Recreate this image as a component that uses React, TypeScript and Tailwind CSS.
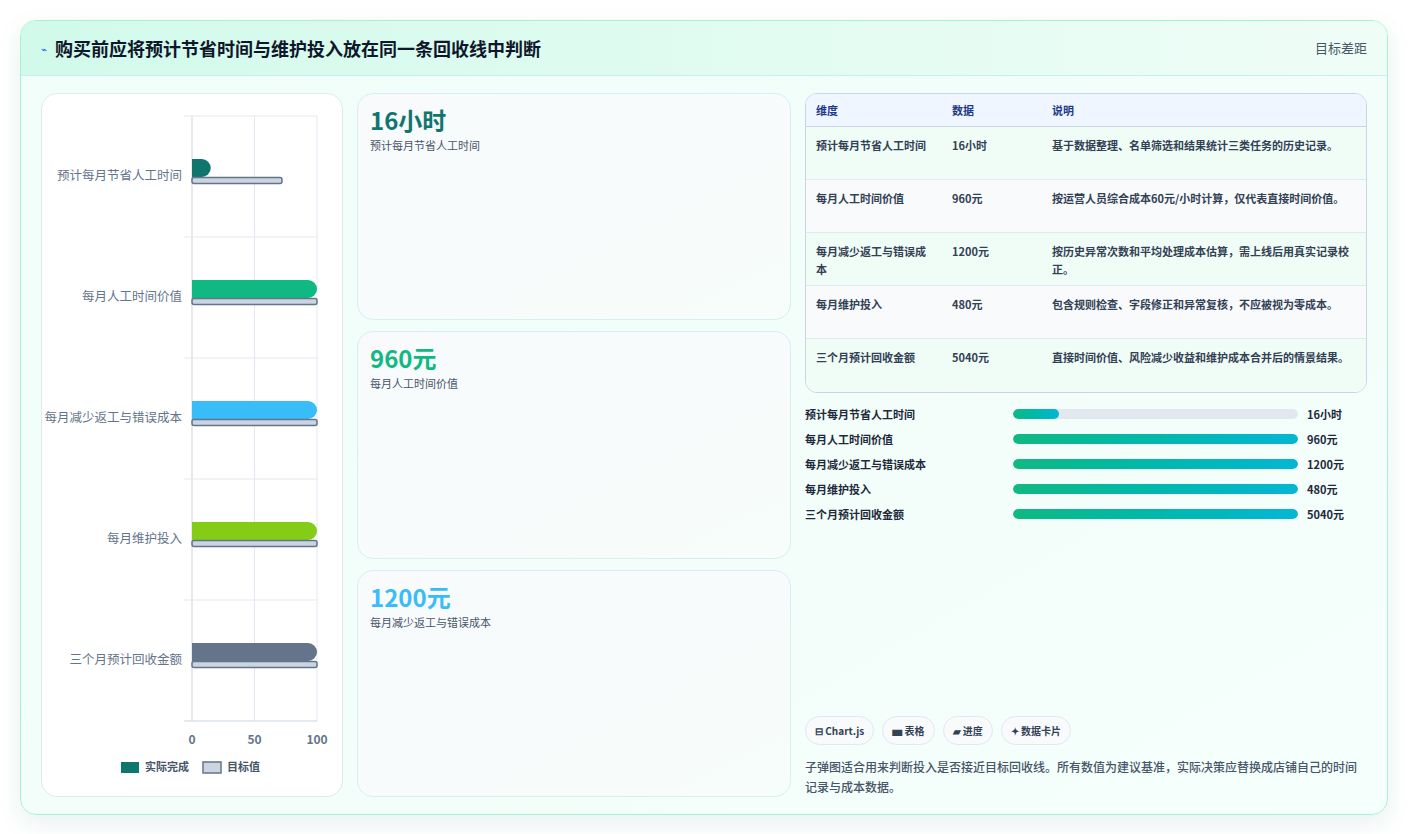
import React from "react";

const F = { fontFamily: '"Noto Sans CJK SC", "Noto Sans", sans-serif' };

const rows = [
  { l: "预计每月节省人工时间", a: 15, c: "#0f766e" },
  { l: "每月人工时间价值", a: 100, c: "#10b981" },
  { l: "每月减少返工与错误成本", a: 100, c: "#38bdf8" },
  { l: "每月维护投入", a: 100, c: "#84cc16" },
  { l: "三个月预计回收金额", a: 100, c: "#64748b" },
];
const targets = [72, 100, 100, 100, 100];

function Chart() {
  // panel-local coords: panel x 40, y 93
  const x0 = 150, x1 = 275, top = 22, h = 121;
  return (
    <svg width="301" height="702" className="block">
      <defs>
        <clipPath id="cp"><rect x="0" y="0" width="301" height="702" rx="14" /></clipPath>
      </defs>
      <g clipPath="url(#cp)">
        {[x0, x0 + 62.5, x1].map((x, i) => (
          <line key={i} x1={x} x2={x} y1={top} y2={top + 605 + (i === 0 ? 0 : 0)} stroke={i === 0 ? "#cbd5e1" : "#e2e8f0"} />
        ))}
        {[0, 1, 2, 3, 4, 5].map((i) => (
          <line key={i} x1={x0 - 8} x2={x1} y1={top + i * h} y2={top + i * h} stroke={i === 5 ? "#cbd5e1" : "#e5e7eb"} />
        ))}
        {rows.map((r, i) => {
          const cy = top + i * h + 60;
          const aw = (r.a / 100) * 125;
          const tw = (targets[i] / 100) * 125;
          return (
            <g key={i}>
              <text x={x0 - 10} y={cy + 4} textAnchor="end" fontSize="12.5" fill="#64748b" style={F}>{r.l}</text>
              <path d={`M${x0} ${cy - 17} H${x0 + aw - 9} a9 9 0 0 1 0 18 H${x0} Z`} fill={r.c} />
              <rect x={x0} y={cy + 1.5} width={tw} height={6} rx="2" fill="#cbd5e1" stroke="#64748b" strokeWidth="1.5" />
            </g>
          );
        })}
        {[["0", x0], ["50", x0 + 62.5], ["100", x1]].map(([t, x]) => (
          <text key={t as string} x={x as number} y={650} textAnchor="middle" fontSize="12" fontWeight="700" fill="#64748b" style={F}>{t}</text>
        ))}
        <rect x="79" y="668" width="18" height="11" fill="#0f766e" />
        <text x="103" y="677" fontSize="11" fontWeight="700" fill="#475569" style={F}>实际完成</text>
        <rect x="161" y="668" width="18" height="11" fill="#cbd5e1" stroke="#64748b" strokeWidth="1.5" />
        <text x="185" y="677" fontSize="11" fontWeight="700" fill="#475569" style={F}>目标值</text>
      </g>
    </svg>
  );
}

const table = [
  ["预计每月节省人工时间", "16小时", "基于数据整理、名单筛选和结果统计三类任务的历史记录。"],
  ["每月人工时间价值", "960元", "按运营人员综合成本60元/小时计算，仅代表直接时间价值。"],
  ["每月减少返工与错误成本", "1200元", "按历史异常次数和平均处理成本估算，需上线后用真实记录校正。"],
  ["每月维护投入", "480元", "包含规则检查、字段修正和异常复核，不应被视为零成本。"],
  ["三个月预计回收金额", "5040元", "直接时间价值、风险减少收益和维护成本合并后的情景结果。"],
];

const prog = [
  ["预计每月节省人工时间", 16, "16小时"],
  ["每月人工时间价值", 100, "960元"],
  ["每月减少返工与错误成本", 100, "1200元"],
  ["每月维护投入", 100, "480元"],
  ["三个月预计回收金额", 100, "5040元"],
] as const;

export default function App() {
  return (
    <div className="w-[1408px] h-[834px] bg-white p-5" style={F}>
      <div className="h-[795px] w-[1368px] rounded-2xl border border-[#a7f3d0] bg-gradient-to-br from-[#f0fdf8] to-[#f5fffb] shadow-[0_8px_24px_rgba(15,118,110,0.10)] overflow-hidden flex flex-col">
        <div className="h-[55px] shrink-0 flex items-center justify-between px-5 bg-gradient-to-r from-[#d1faeb] to-[#effdf7] border-b border-[#c7eef0]">
          <div className="flex items-center gap-2">
            <span className="text-[10px] text-[#2563eb]">⌁</span>
            <h1 className="text-[18px] font-bold text-[#0f172a]">购买前应将预计节省时间与维护投入放在同一条回收线中判断</h1>
          </div>
          <span className="text-[13px] text-[#475569]">目标差距</span>
        </div>
        <div className="flex-1 flex gap-[14px] px-5 pt-[17px] pb-[18px]">
          <div className="w-[302px] shrink-0 rounded-2xl bg-white border border-[#e2e8f0]">
            <Chart />
          </div>
          <div className="w-[434px] shrink-0 flex flex-col gap-[11px]">
            {[["16小时", "预计每月节省人工时间", "text-[#0f766e]"], ["960元", "每月人工时间价值", "text-[#10b981]"], ["1200元", "每月减少返工与错误成本", "text-[#38bdf8]"]].map(([v, l, c]) => (
              <div key={v} className="flex-1 rounded-2xl border border-[#d9eef0] bg-gradient-to-br from-[#f8fafc] to-[#f7fdfb] px-3 pt-[10px]">
                <div className={`text-[24px] font-bold leading-[32px] ${c}`}>{v}</div>
                <div className="text-[11px] text-[#475569] mt-[1px]">{l}</div>
              </div>
            ))}
          </div>
          <div className="flex-1 flex flex-col">
            <div className="rounded-xl border border-[#cbd5e1] overflow-hidden bg-white">
              <div className="flex h-[33px] items-center bg-[#eff6ff] border-b border-[#cbd5e1] text-[11px] font-bold text-[#1e3a8a]">
                <div className="w-[136px] pl-[10px]">维度</div>
                <div className="w-[100px] pl-[10px]">数据</div>
                <div className="flex-1 pl-[10px]">说明</div>
              </div>
              {table.map((r, i) => (
                <div key={i} className={`flex h-[53px] pt-[9px] text-[11px] font-bold text-[#334155] leading-[18px] ${i % 2 === 0 ? "bg-[#f0fdf7]" : "bg-[#f8fafc]"} ${i < 4 ? "border-b border-[#e2e8f0]" : ""}`}>
                  <div className="w-[136px] pl-[10px] pr-2">{r[0]}</div>
                  <div className="w-[100px] pl-[10px]">{r[1]}</div>
                  <div className="flex-1 pl-[10px] pr-4">{r[2]}</div>
                </div>
              ))}
            </div>
            <div className="mt-[12px] flex flex-col gap-[7px]">
              {prog.map(([l, p, v]) => (
                <div key={l} className="flex items-center h-[18px] text-[11px] font-bold text-[#1e293b]">
                  <div className="w-[208px]">{l}</div>
                  <div className="w-[285px] h-[10px] rounded-full bg-[#e2e8f0] overflow-hidden">
                    <div className="h-full rounded-full bg-gradient-to-r from-[#10b981] to-[#06b6d4]" style={{ width: `${p}%` }} />
                  </div>
                  <div className="ml-[9px]">{v}</div>
                </div>
              ))}
            </div>
            <div className="flex-1" />
            <div className="flex gap-2 mb-[12px]">
              {["⊟ Chart.js", "▅ 表格", "▰ 进度", "✦ 数据卡片"].map((t) => (
                <span key={t} className="h-[29px] px-[9px] flex items-center rounded-full border border-[#e2e8f0] bg-[#f8fafc] text-[10px] font-bold text-[#334155]">{t}</span>
              ))}
            </div>
            <p className="text-[12px] leading-[20px] text-[#475569] font-medium">子弹图适合用来判断投入是否接近目标回收线。所有数值为建议基准，实际决策应替换成店铺自己的时间记录与成本数据。</p>
          </div>
        </div>
      </div>
    </div>
  );
}
